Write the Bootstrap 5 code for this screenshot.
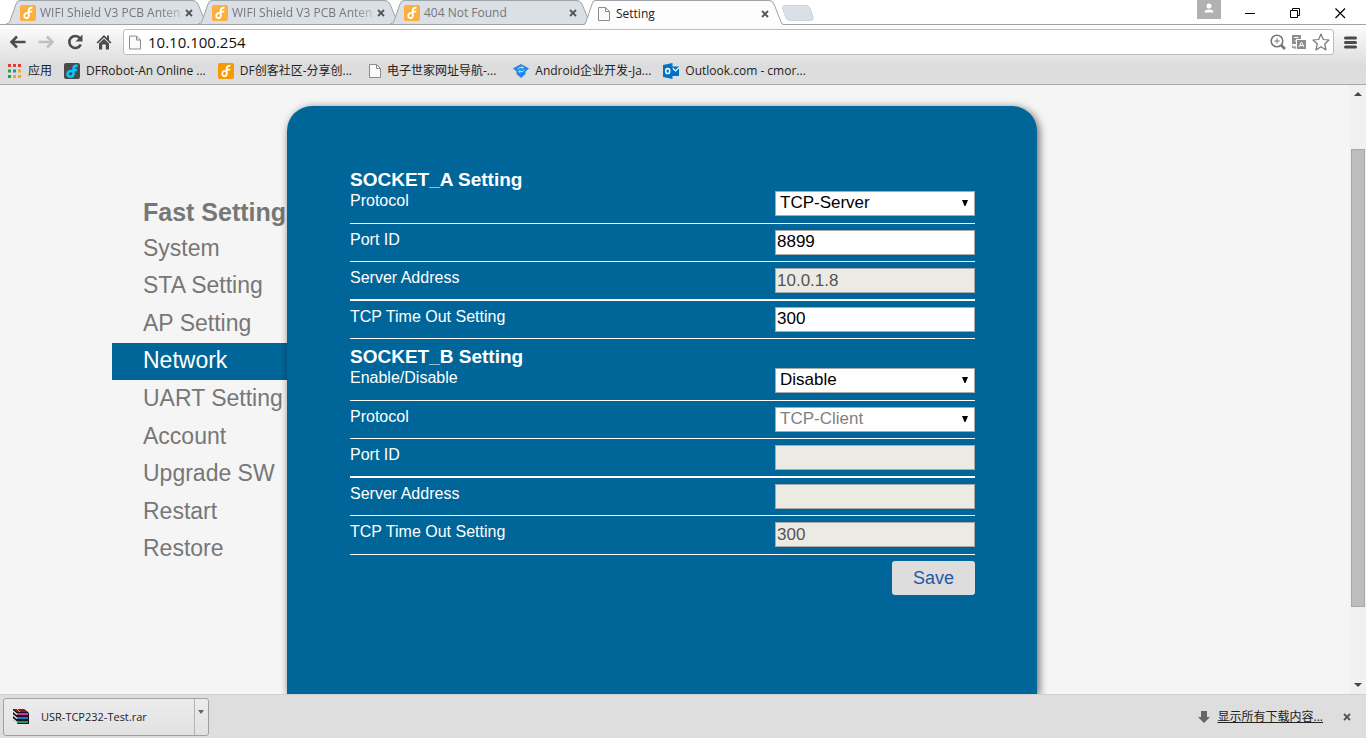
<!DOCTYPE html>
<html lang="zh-CN">
<head>
<meta charset="utf-8">
<meta name="viewport" content="width=device-width, initial-scale=1">
<title>Setting</title>
<link href="https://cdn.jsdelivr.net/npm/bootstrap@5.3.0/dist/css/bootstrap.min.css" rel="stylesheet">
<script src="https://cdn.jsdelivr.net/npm/bootstrap@5.3.0/dist/js/bootstrap.bundle.min.js"></script>
<style>
  body { font-family: "Open Sans", "Noto Sans CJK SC", sans-serif; font-size: 12px; line-height: 16px; color: #222; background: #fff; }
  svg { display: block; flex: none; }
  button { font: inherit; color: inherit; }
  .bare { border: 0; padding: 0; background: none; }

  /* tab strip */
  .tab-strip { height: 24px; padding-left: 6px; background: #fff; }
  .tab-item { width: 204px; height: 24px; margin-right: -12px; padding: 2px 14px 0; color: #777; }
  .tab-item.current { color: #222; z-index: 2; height: 25px; }
  .tab-shape { position: absolute; inset: 0; width: 100%; height: 100%; z-index: -1; }
  .tab-item, .strip-wrap { position: relative; isolation: isolate; }
  .tab-title { flex: 1; margin: 0 4px; white-space: nowrap; }
  .tab-title.faded { -webkit-mask-image: linear-gradient(90deg, #000 86%, rgba(0,0,0,.3)); mask-image: linear-gradient(90deg, #000 86%, rgba(0,0,0,.3)); }
  .tab-item .bare { margin-right: 3px; }
  .new-tab { margin: 5px 0 0 8px; }
  .user-box { width: 24px; height: 19px; background: #b1b1b1; }
  .win-controls { gap: 34px; padding-right: 20px; }

  /* toolbar and bookmarks */
  .browser-bars { background: linear-gradient(#fdfdfd, #dcdcdc 70%, #dfdfdf); border-top: 1px solid #a3a3a3; border-bottom: 1px solid #a8a8a8; }
  .tool-row { height: 34px; padding: 0 9px; }
  .nav-icons { gap: 12px; width: 114px; }
  .address-box { height: 26px; background: #fff; border: 1px solid #bcbcbc; border-radius: 3px; padding: 0 3px; }
  .address-box input { border: 0; outline: 0; background: none; font-size: 15px; line-height: 20px; padding: 0 5px; color: #111; min-width: 0; }
  .address-icons { gap: 6px; }
  .menu-button { margin-left: 10px; }
  .mark-row { height: 25px; padding: 0 8px 2px; gap: 12px; }
  .mark-row a { display: flex; align-items: center; gap: 6px; white-space: nowrap; color: #222; text-decoration: none; }
  .mark-row .wide { margin-left: 5px; }

  /* settings page */
  .view { background: #f5f5f5; min-height: 0; overflow: hidden; font-family: "Liberation Sans", Arial, sans-serif; }
  .site { max-width: 1126px; }
  .side { width: 175px; padding-top: 112px; }
  .side h2 { font-size: 25px; line-height: 30px; font-weight: bold; color: #777; margin: 0; padding: 0 0 3px 31px; white-space: nowrap; }
  .side-list { display: grid; grid-auto-rows: 1fr; height: 338px; }
  .side-list a { display: flex; align-items: center; padding: 0 0 2px 31px; font-size: 23px; line-height: 28px; color: #777; text-decoration: none; white-space: nowrap; }
  .side-list a.active { background: #069; color: #fff; }
  .panel { position: relative; width: 750px; margin-top: 21px; padding: 56px 62px 0 63px; background: #069; color: #fff; border-radius: 25px 25px 0 0; box-shadow: 2px 2px 8px rgba(0,0,0,.6); }
  .panel h3 { font-size: 19px; line-height: 23px; font-weight: bold; margin: 0 0 -6px; padding-top: 6px; }
  .rows-a, .rows-b { display: grid; grid-auto-rows: 1fr; }
  .rows-a { height: 154px; }
  .rows-b { height: 193px; }
  .setting { display: flex; justify-content: space-between; align-items: flex-start; padding-top: 6px; border-bottom: 1px solid #fff; }
  .setting:nth-child(3) { border-bottom-width: 2px; }
  .setting label { font-size: 16px; line-height: 19px; }
  .field { width: 200px; height: 25px; border: 1px solid #a9a9a9; border-radius: 0; background-color: #fff; color: #000; font-size: 17px; line-height: 22px; padding: 0 1px; }
  .field:disabled { background-color: #ebebe4; color: #545454; opacity: 1; }
  select.field { appearance: none; padding: 0 4px 2px; background-image: url("data:image/svg+xml,%3Csvg xmlns='http://www.w3.org/2000/svg' width='6' height='6'%3E%3Cpath d='M0 0H6L3.5 6H2.5Z'/%3E%3C/svg%3E"); background-repeat: no-repeat; background-position: right 6px top 8px; }
  select.field:disabled { background-color: #fff; color: #808080; }
  .save { width: 83px; height: 34px; margin-top: 6px; background: #ddd; color: #1e5aa8; border: 0; border-radius: 3px; font-size: 18px; }

  .scroll-rail { width: 16px; background: #f0f0f0; padding: 0 1px; }
  .scroll-rail button { height: 17px; }
  .above { flex: 47; }
  .thumb { flex: 458; background: #bdbdbd; border: 1px solid #a8a8a8; }
  .below { flex: 70; }

  /* downloads */
  .shelf { height: 44px; background: #dedede; border-top: 1px solid #d0d0d0; padding: 0 15px 0 3px; }
  .dl-item { width: 206px; height: 38px; border: 1px solid #a0a0a0; border-radius: 3px; background: linear-gradient(#ececec, #e2e2e2); }
  .dl-name { font-size: 11px; }
  .dl-item .more { width: 14px; height: 36px; border-left: 1px solid #b5b5b5; padding: 0 0 10px 3px; }
  .shelf a { color: #222; text-decoration: underline; }
</style>
</head>
<body class="vh-100 d-flex flex-column overflow-hidden">

<svg width="0" height="0" class="position-absolute" aria-hidden="true">
  <symbol id="df" viewBox="0 0 16 16"><path d="M8.700 11V5.500Q8.700 2.600 12.500 2.600M9 6.600H12.300M9 8.300C6 7.300 4.500 8.500 4.300 10.500S5.500 13.400 6.800 13.200Q8.700 13 8.700 10.500" fill="none" stroke="#fff" stroke-width="1.900"/></symbol>
  <symbol id="doc" viewBox="0 0 12 14"><path d="M.5.5H7.500L11.500 4.500V13.500H.5Z" fill="#fafafa" stroke="#8c8c8c"/><path d="M7.500.5V4.500H11.500" fill="none" stroke="#8c8c8c"/></symbol>
  <symbol id="close" viewBox="0 0 8 8"><path d="M1 1L7 7M7 1L1 7" stroke="#555" stroke-width="1.800"/></symbol>
  <symbol id="tab" viewBox="0 0 204 24" preserveAspectRatio="none"><path d="M0 24Q3 24 4 21L10 4Q11 .5 14 .5H187Q190 .5 192 4L199 21Q200 24 204 24" stroke="#a0a3a8"/></symbol>
</svg>

<header>
  <div class="tab-strip d-flex align-items-start strip-wrap">
    <div class="tab-item d-flex align-items-center"><svg class="tab-shape" fill="#dbdfe6"><use href="#tab"/></svg>
      <svg width="16" height="16"><rect width="16" height="16" rx="2" fill="#f9b03e"/><use href="#df"/></svg>
      <span class="tab-title faded">WIFI Shield V3 PCB Anten</span>
      <button class="bare" aria-label="Close tab"><svg width="8" height="8"><use href="#close"/></svg></button></div>
    <div class="tab-item d-flex align-items-center"><svg class="tab-shape" fill="#dbdfe6"><use href="#tab"/></svg>
      <svg width="16" height="16"><rect width="16" height="16" rx="2" fill="#f9b03e"/><use href="#df"/></svg>
      <span class="tab-title faded">WIFI Shield V3 PCB Anten</span>
      <button class="bare" aria-label="Close tab"><svg width="8" height="8"><use href="#close"/></svg></button></div>
    <div class="tab-item d-flex align-items-center"><svg class="tab-shape" fill="#dbdfe6"><use href="#tab"/></svg>
      <svg width="16" height="16"><rect width="16" height="16" rx="2" fill="#f9b03e"/><use href="#df"/></svg>
      <span class="tab-title">404 Not Found</span>
      <button class="bare" aria-label="Close tab"><svg width="8" height="8"><use href="#close"/></svg></button></div>
    <div class="tab-item current d-flex align-items-center"><svg class="tab-shape" fill="#fdfdfd"><use href="#tab"/></svg>
      <svg width="16" height="14"><use href="#doc" x="2" width="12" height="14"/></svg>
      <span class="tab-title">Setting</span>
      <button class="bare" aria-label="Close tab"><svg width="8" height="8"><use href="#close"/></svg></button></div>
    <button class="bare new-tab" aria-label="New tab"><svg width="32" height="16"><path d="M3 .5H24Q27 .5 28 3L31 12Q32 15.500 29 15.500H8Q5 15.500 4 13L.8 4Q0 .5 3 .5Z" fill="#dbdfe6" stroke="#cfd2d8"/></svg></button>
    <div class="ms-auto d-flex align-items-start">
      <button class="bare user-box me-4" aria-label="User"><svg width="24" height="19"><circle cx="12" cy="6" r="2.500" fill="#fff"/><path d="M7.500 12.500Q7.500 9.500 12 9.500T16.500 12.500Z" fill="#fff"/></svg></button>
      <div class="win-controls d-flex align-items-center pt-2">
        <button class="bare" aria-label="Minimize"><svg width="11" height="11"><path d="M0 5.500H10" stroke="#000"/></svg></button>
        <button class="bare" aria-label="Restore"><svg width="11" height="11"><path d="M2.500 2.500V.5H9.500V7.500H7.500M.5 2.500H7.500V9.500H.5Z" fill="none" stroke="#000"/></svg></button>
        <button class="bare" aria-label="Close"><svg width="11" height="11"><path d="M.5.5L10 10M10 .5L.5 10" stroke="#000" stroke-width="1.200"/></svg></button>
      </div>
    </div>
  </div>

  <div class="browser-bars">
    <div class="tool-row d-flex align-items-center">
      <div class="nav-icons d-flex align-items-center">
        <button class="bare" aria-label="Back"><svg width="17" height="14"><path d="M2 7H16.500M8 1.500L2.500 7L8 12.500" fill="none" stroke="#4c4c4c" stroke-width="2.600"/></svg></button>
        <button class="bare" aria-label="Forward"><svg width="17" height="14"><path d="M15 7H.5M9 1.500L14.500 7L9 12.500" fill="none" stroke="#c0c0c0" stroke-width="2.600"/></svg></button>
        <button class="bare" aria-label="Reload"><svg width="17" height="16"><path d="M13 4.200A6 6 0 1 0 13.800 10.500" fill="none" stroke="#4c4c4c" stroke-width="2.600"/><path d="M15.500.5V7.500H8.500Z" fill="#4c4c4c"/></svg></button>
        <button class="bare" aria-label="Home"><svg width="16" height="16"><path d="M8 1L.5 8.500L1.800 9.500L8 3.500L14.200 9.500L15.500 8.500L13 6V1.500H11V4Z" fill="#4c4c4c"/><path d="M3 9.500L8 4.800L13 9.500V15.500H9.800V10.500H6.200V15.500H3Z" fill="#4c4c4c"/></svg></button>
      </div>
      <div class="address-box d-flex align-items-center flex-fill">
        <svg width="16" height="15"><use href="#doc" x="2" width="12" height="15"/></svg>
        <input class="flex-fill" type="text" value="10.10.100.254" aria-label="Address">
        <div class="address-icons d-flex align-items-center">
          <svg width="16" height="16"><circle cx="7" cy="7" r="5.800" fill="none" stroke="#777" stroke-width="1.600"/><path d="M4.300 7H9.700M7 4.300V9.700" stroke="#777"/><path d="M11 11L15 15" stroke="#777" stroke-width="2.600"/></svg>
          <svg width="14" height="14"><path d="M0 0H9V4H4V9H0Z" fill="#8c8c8c"/><path d="M2 2.500H6.500M2.500 6H4" stroke="#fff"/><rect x="5" y="5" width="9" height="9" fill="#8c8c8c"/><path d="M7 12L9.500 7L12 12M8 10.500H11" fill="none" stroke="#fff"/><path d="M.5 10.500V12.500H3M2 10.500L4 12.500L2 14" fill="none" stroke="#8c8c8c"/></svg>
          <svg width="18" height="18"><path d="M9 1L11.300 6.500L17 7L12.700 11L14 17L9 13.800L4 17L5.300 11L1 7L6.700 6.500Z" fill="none" stroke="#777" stroke-width="1.200" stroke-linejoin="round"/></svg>
        </div>
      </div>
      <button class="bare menu-button" aria-label="Menu"><svg width="13" height="13"><path d="M1.500 2H11.500M1.500 6.500H11.500M1.500 11H11.500" stroke="#4a4a4a" stroke-width="3" stroke-linecap="round"/></svg></button>
    </div>
    <nav class="mark-row d-flex align-items-center" aria-label="Bookmarks">
      <a href="#"><svg width="14" height="14"><path d="M0 1.500H14" stroke="#e33b2e" stroke-width="3" stroke-dasharray="3 2"/><path d="M0 7H3M0 12.500H3" stroke="#2a9d53" stroke-width="3"/><path d="M5 7H8" stroke="#2f80ed" stroke-width="3"/><path d="M10 7H13M5 12.500H8M10 12.500H13" stroke="#f2a81d" stroke-width="3"/></svg><span>应用</span></a>
      <a href="#"><svg width="16" height="16"><rect width="16" height="16" rx="2" fill="#4a4a4a"/><path d="M9.500 12V5.500Q9.500 2.500 13.500 2.500M9.500 7H13M9.500 8.500C6 7.500 3.500 8.500 3.500 11S5.500 13.800 7 13.500Q9.500 13.500 9.500 10" fill="none" stroke="#0cf" stroke-width="2.500"/></svg><span>DFRobot-An Online ...</span></a>
      <a href="#"><svg width="16" height="16"><rect width="16" height="16" rx="2" fill="#f59a00"/><use href="#df"/></svg><span>DF创客社区-分享创...</span></a>
      <a href="#" class="wide"><svg width="12" height="14"><use href="#doc" width="12" height="14"/></svg><span>电子世家网址导航-...</span></a>
      <a href="#" class="wide"><svg width="16" height="14"><path d="M8 0L16 4.500L12.500 7.500V10L8 14L3.500 10V7.500L0 4.500Z" fill="#1e88e5"/><path d="M5 5.500Q5 3.500 7 3.500H9.500M8.500 2L10.500 3.500L8.500 5M11 5.500Q11 7.500 9 7.500H6.500M7.500 6L5.500 7.500L7.500 9" stroke="#b9dcfb" fill="none"/></svg><span>Android企业开发-Ja...</span></a>
      <a href="#"><svg width="16" height="16"><path d="M9 3.500H16V13H9Z" fill="#0072c6"/><path d="M9.500 5L12.500 8L16 4.500" fill="none" stroke="#fff" stroke-width="1.200"/><path d="M0 2L9.500 0V16L0 14Z" fill="#0072c6"/><ellipse cx="4.700" cy="8" rx="2" ry="2.600" fill="none" stroke="#fff" stroke-width="1.500"/></svg><span>Outlook.com - cmor...</span></a>
    </nav>
  </div>
</header>

<div class="view d-flex flex-fill">
  <main class="flex-fill overflow-hidden">
    <div class="site d-flex mx-auto h-100">
      <nav class="side flex-shrink-0" aria-label="Settings">
        <h2>Fast Setting</h2>
        <div class="side-list">
          <a href="#">System</a><a href="#">STA Setting</a><a href="#">AP Setting</a>
          <a href="#" class="active" aria-current="page">Network</a>
          <a href="#">UART Setting</a><a href="#">Account</a><a href="#">Upgrade SW</a><a href="#">Restart</a><a href="#">Restore</a>
        </div>
      </nav>
      <form class="panel" onsubmit="return false">
        <h3>SOCKET_A Setting</h3>
        <div class="rows-a">
          <div class="setting"><label for="a1">Protocol</label><select id="a1" class="field"><option>TCP-Server</option><option>TCP-Client</option></select></div>
          <div class="setting"><label for="a2">Port ID</label><input id="a2" class="field" value="8899"></div>
          <div class="setting"><label for="a3">Server Address</label><input id="a3" class="field" value="10.0.1.8" disabled></div>
          <div class="setting"><label for="a4">TCP Time Out Setting</label><input id="a4" class="field" value="300"></div>
        </div>
        <h3>SOCKET_B Setting</h3>
        <div class="rows-b">
          <div class="setting"><label for="b1">Enable/Disable</label><select id="b1" class="field"><option>Disable</option><option>Enable</option></select></div>
          <div class="setting"><label for="b2">Protocol</label><select id="b2" class="field" disabled><option>TCP-Client</option></select></div>
          <div class="setting"><label for="b3">Port ID</label><input id="b3" class="field" disabled></div>
          <div class="setting"><label for="b4">Server Address</label><input id="b4" class="field" disabled></div>
          <div class="setting"><label for="b5">TCP Time Out Setting</label><input id="b5" class="field" value="300" disabled></div>
        </div>
        <div class="text-end"><button class="save">Save</button></div>
      </form>
    </div>
  </main>
  <div class="scroll-rail d-flex flex-column">
    <button class="bare" aria-label="Scroll up"><svg width="14" height="17"><path d="M3 11L7 7L11 11Z" fill="#444"/></svg></button>
    <div class="above"></div><div class="thumb"></div><div class="below"></div>
    <button class="bare" aria-label="Scroll down"><svg width="14" height="17"><path d="M3 6L7 10L11 6Z" fill="#444"/></svg></button>
  </div>
</div>

<footer class="shelf d-flex align-items-center">
  <div class="dl-item d-flex align-items-center">
    <button class="bare d-flex align-items-center flex-fill ps-2">
      <svg width="17" height="17"><path d="M1 1H12L17 5V16H6L1 12Z" fill="#1a1020"/><path d="M1 1H11L16 4H5Z" fill="#8a1538"/><path d="M5 5H16V7H5Z" fill="#c83a96"/><path d="M5 9H16V11H5Z" fill="#1d78c8"/><path d="M5 13H16V15H5Z" fill="#1c9a60"/><path d="M1 3L5 6.500M1 7L5 10.500M1 11L5 14.500" stroke="#eee" stroke-width="1.400"/><path d="M5 1L8 4" stroke="#e5b93a"/></svg>
      <span class="dl-name ms-2 ps-1">USR-TCP232-Test.rar</span></button>
    <button class="bare more" aria-label="More"><svg width="6" height="4"><path d="M0 0H6L3 4Z" fill="#666"/></svg></button>
  </div>
  <div class="ms-auto d-flex align-items-center">
    <svg width="12" height="12" class="me-2"><path d="M3 0H9V6H12L6 12L0 6H3Z" fill="#666"/></svg>
    <a href="#">显示所有下载内容...</a>
    <button class="bare ms-3 ps-1" aria-label="Close downloads"><svg width="8" height="8"><use href="#close"/></svg></button>
  </div>
</footer>
</body>
</html>
